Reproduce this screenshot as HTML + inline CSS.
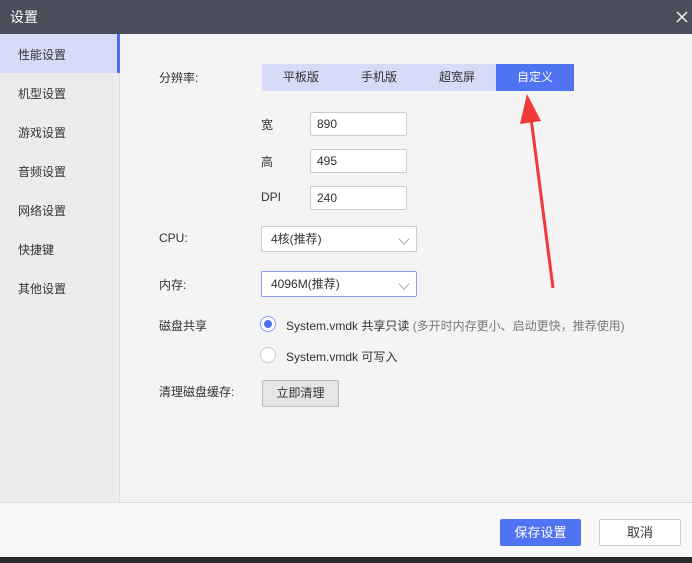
<!DOCTYPE html><html><head><meta charset="utf-8"><style>
*{margin:0;padding:0;box-sizing:border-box}
body{width:692px;height:563px;overflow:hidden;background:#2a2a2a;font-family:"Liberation Sans","Noto Sans CJK SC",sans-serif;font-size:12px;color:#333;position:relative}
.a{position:absolute}
.title{left:0;top:0;width:692px;height:34px;background:#4a4d5a;color:#fff;font-size:14px;line-height:34px;padding-left:10px}
.side{left:0;top:34px;width:120px;height:468px;background:#ececec;border-right:1px solid #ddd}
.main{left:120px;top:34px;width:572px;height:468px;background:#f4f4f4}
.foot{left:0;top:502px;width:692px;height:55px;background:#f8f8f8;border-top:1px solid #ddd}
.si{left:18px;font-size:12px;color:#333}
.inp{background:#fff;border:1px solid #ccc;border-radius:2px;height:24px;line-height:22px;padding-left:6px;width:97px;left:310px}
.sel{background:#fff;border:1px solid #ccc;border-radius:2px;height:26px;line-height:24px;padding-left:9px;width:156px;left:261px}
.chev{position:absolute;right:8px;top:8px;width:8px;height:8px;border-right:1px solid #aaa;border-bottom:1px solid #aaa;transform:rotate(45deg)}
.tab{top:64px;height:27px;line-height:27px;width:78px;text-align:center;background:#d6dcf7}
</style></head><body>
<div class="a title">设置</div>
<svg class="a" style="left:676px;top:11px" width="12" height="12"><path d="M1 1L11 11M11 1L1 11" stroke="#fff" stroke-width="1.3"/></svg>
<div class="a side"></div>
<div class="a" style="left:0;top:34px;width:120px;height:39px;background:#d6dcf7;border-right:3px solid #4f6ef2"></div>
<div class="a si" style="top:46px">性能设置</div>
<div class="a si" style="top:85px">机型设置</div>
<div class="a si" style="top:124px">游戏设置</div>
<div class="a si" style="top:163px">音频设置</div>
<div class="a si" style="top:202px">网络设置</div>
<div class="a si" style="top:241px">快捷键</div>
<div class="a si" style="top:280px">其他设置</div>
<div class="a main"></div>
<div class="a" style="left:159px;top:69px">分辨率:</div>
<div class="a tab" style="left:262px">平板版</div>
<div class="a tab" style="left:340px">手机版</div>
<div class="a tab" style="left:418px">超宽屏</div>
<div class="a tab" style="left:496px;background:#4f73f3;color:#fff">自定义</div>
<div class="a" style="left:261px;top:116px">宽</div>
<div class="a inp" style="top:112px">890</div>
<div class="a" style="left:261px;top:153px">高</div>
<div class="a inp" style="top:149px">495</div>
<div class="a" style="left:261px;top:190px">DPI</div>
<div class="a inp" style="top:186px">240</div>
<div class="a" style="left:159px;top:231px">CPU:</div>
<div class="a sel" style="top:226px">4核(推荐)<span class="chev"></span></div>
<div class="a" style="left:159px;top:276px">内存:</div>
<div class="a sel" style="top:271px;border-color:#8a9cf0">4096M(推荐)<span class="chev"></span></div>
<div class="a" style="left:159px;top:317px">磁盘共享</div>
<div class="a" style="left:260px;top:316px;width:16px;height:16px;border-radius:50%;border:1px solid #8aa0f3;background:#fff"><div style="margin:3px;width:8px;height:8px;border-radius:50%;background:#4f73f3"></div></div>
<div class="a" style="left:286px;top:317px;color:#333">System.vmdk 共享只读 <span style="color:#777">(多开时内存更小、启动更快，推荐使用)</span></div>
<div class="a" style="left:260px;top:347px;width:16px;height:16px;border-radius:50%;border:1px solid #ccc;background:#fff"></div>
<div class="a" style="left:286px;top:348px">System.vmdk 可写入</div>
<div class="a" style="left:159px;top:383px">清理磁盘缓存:</div>
<div class="a" style="left:262px;top:380px;width:77px;height:27px;line-height:25px;text-align:center;background:#e6e6e6;border:1px solid #bbb;border-radius:2px">立即清理</div>
<svg class="a" style="left:0;top:0" width="692" height="563"><path d="M553 288L531 118" stroke="#f03a3a" stroke-width="3"/><path d="M527 94L520 124L541 121Z" fill="#f03a3a"/></svg>
<div class="a foot"></div>
<div class="a" style="left:500px;top:519px;width:81px;height:27px;line-height:27px;text-align:center;background:#4f73f3;color:#fff;font-size:13px;border-radius:2px">保存设置</div>
<div class="a" style="left:599px;top:519px;width:82px;height:27px;line-height:25px;text-align:center;background:#fff;border:1px solid #ccc;font-size:13px;border-radius:2px">取消</div>
</body></html>
